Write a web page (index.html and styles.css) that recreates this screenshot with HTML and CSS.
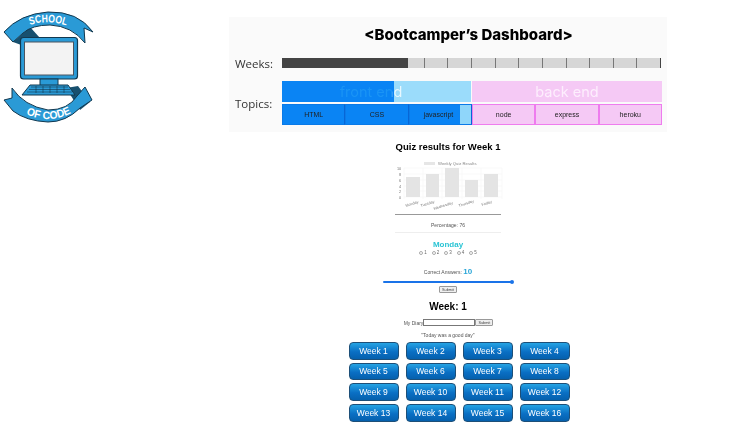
FILE: index.html
```html
<!DOCTYPE html>
<html lang="en">
<head>
    <meta charset="UTF-8">
    <meta name="viewport" content="width=device-width, initial-scale=1.0">
    <title>Bootcamper's Dashboard</title>
    <link rel="stylesheet" href="styles.css">
</head>
<body>

<div class="page">
    <div class="logo-col">
        <svg class="logo" viewBox="0 0 100 130" width="100" height="130">
            <defs>
                <path id="arcTop" d="M30 25 Q48 19 68 26"/>
                <path id="arcBottom" d="M26 114 Q50 125 73 112"/>
            </defs>
            <!-- diagonal bars behind screen -->
            <path d="M13 42 L30 27 L40 38 L24 46 Z" fill="#17506f"/>
            <path d="M66 88 L78 86 L90 102 L80 110 Z" fill="#17506f"/>
            <!-- top ribbon -->
            <path d="M4 32 Q20 14 48 12 Q78 11 93 32 L84 28 L85 43 Q72 26 50 25 Q32 25 23 33 L13 42 Z" fill="#2a9ad6" stroke="#12384f" stroke-width="1"/>
            <!-- monitor -->
            <rect x="20.5" y="37.5" width="57" height="41.5" rx="3" fill="#2a9ad6" stroke="#12384f" stroke-width="1.2"/>
            <rect x="24.5" y="42" width="49" height="33" fill="#f3f3f3" stroke="#4a5560" stroke-width="1"/>
            <rect x="40" y="79" width="18" height="7" fill="#2a9ad6" stroke="#12384f" stroke-width="1"/>
            <path d="M30 85 H68 L75 95 H22 Z" fill="#2a9ad6" stroke="#12384f" stroke-width="1"/>
            <path d="M31 87 H68 M29 89.5 H70 M27 92 H72 M36 86 V93 M43 86 V93 M50 86 V93 M57 86 V93 M64 86 V93" stroke="#12384f" stroke-width=".6" fill="none"/>
            <!-- bottom ribbon -->
            <path d="M4 100 L12 98 L12 88 Q24 106 48 110 Q68 110 77 96 L85 87 L92 100 L80 108 Q66 122 48 122 Q26 121 13 111 Z" fill="#2a9ad6" stroke="#12384f" stroke-width="1"/>
            <text class="logo-text"><textPath href="#arcTop" textLength="37" lengthAdjust="spacingAndGlyphs">SCHOOL</textPath></text>
            <text class="logo-text"><textPath href="#arcBottom" textLength="47" lengthAdjust="spacingAndGlyphs">OF CODE</textPath></text>
        </svg>
    </div>

    <div class="main">
        <div class="dashboard">
            <h1>&lt;Bootcamper’s Dashboard&gt;</h1>

            <div class="row weeks-row">
                <span class="row-label">Weeks:</span>
                <div class="week-track">
                    <div class="week-cell done"></div>
                    <div class="week-cell done"></div>
                    <div class="week-cell done"></div>
                    <div class="week-cell done"></div>
                    <div class="week-cell done"></div>
                    <div class="week-cell part"></div>
                    <div class="week-cell"></div>
                    <div class="week-cell"></div>
                    <div class="week-cell"></div>
                    <div class="week-cell"></div>
                    <div class="week-cell"></div>
                    <div class="week-cell"></div>
                    <div class="week-cell"></div>
                    <div class="week-cell"></div>
                    <div class="week-cell"></div>
                    <div class="week-cell"></div>
                </div>
            </div>

            <div class="row topics-row">
                <span class="row-label">Topics:</span>
                <div class="topics">
                    <div class="topic-heads">
                        <div class="topic-head front">
                            <div class="head-fill"></div>
                            <span>front end</span>
                        </div>
                        <div class="topic-head back"><span>back end</span></div>
                    </div>
                    <div class="subtopics">
                        <div class="sub blue">HTML</div>
                        <div class="sub blue">CSS</div>
                        <div class="sub blue js">javascript<div class="js-rest"></div></div>
                        <div class="sub pink">node</div>
                        <div class="sub pink">express</div>
                        <div class="sub pink">heroku</div>
                    </div>
                </div>
            </div>
        </div>

        <h2 class="quiz-title">Quiz results for Week 1</h2>

        <svg class="chart" viewBox="0 0 110 56" width="110" height="56">
            <rect x="29" y="4" width="11" height="3" fill="#e6e6e6"/>
            <text class="chart-title" x="43" y="7">Weekly Quiz Results</text>
            <g stroke="#f0f0f0" stroke-width=".5">
                <path d="M9 10 H107 M9 16 H107 M9 22 H107 M9 28 H107 M9 33 H107 M9 39 H107"/>
                <path d="M9 10 V41 M28 10 V41 M47 10 V41 M67 10 V41 M86 10 V41 M107 10 V41"/>
            </g>
            <g fill="#e4e4e4">
                <rect x="11" y="19" width="14" height="20"/>
                <rect x="31" y="16" width="13" height="23"/>
                <rect x="50" y="10" width="14" height="29"/>
                <rect x="70" y="22" width="13" height="17"/>
                <rect x="89" y="16" width="14" height="23"/>
            </g>
            <g class="chart-text">
                <text x="2" y="11.5">10</text>
                <text x="4" y="17.5">8</text>
                <text x="4" y="23.5">6</text>
                <text x="4" y="29.5">4</text>
                <text x="4" y="34.5">2</text>
                <text x="4" y="40.5">0</text>
                <text transform="translate(11 49) rotate(-18)">Monday</text>
                <text transform="translate(26 49) rotate(-18)">Tuesday</text>
                <text transform="translate(39 52) rotate(-18)">Wednesday</text>
                <text transform="translate(64 49) rotate(-18)">Thursday</text>
                <text transform="translate(87 48) rotate(-18)">Friday</text>
            </g>
        </svg>

        <hr class="rule dark">
        <p class="tiny percent">Percentage: 76</p>
        <hr class="rule light">

        <div class="day">Monday</div>
        <div class="options">
            <label><span class="radio"></span>1</label>
            <label><span class="radio"></span>2</label>
            <label><span class="radio"></span>3</label>
            <label><span class="radio"></span>4</label>
            <label><span class="radio"></span>5</label>
        </div>

        <p class="tiny answers">Correct Answers: <b>10</b></p>

        <div class="slider"><span class="thumb"></span></div>
        <button class="small-btn submit">Submit</button>

        <h3 class="week-title">Week: 1</h3>

        <div class="diary">
            <span>My Diary</span><input class="diary-input" type="text"><button class="small-btn">Submit</button>
        </div>
        <p class="tiny quote">"Today was a good day"</p>

        <div class="week-grid">
            <button class="week-btn">Week 1</button>
            <button class="week-btn">Week 2</button>
            <button class="week-btn">Week 3</button>
            <button class="week-btn">Week 4</button>
            <button class="week-btn">Week 5</button>
            <button class="week-btn">Week 6</button>
            <button class="week-btn">Week 7</button>
            <button class="week-btn">Week 8</button>
            <button class="week-btn">Week 9</button>
            <button class="week-btn">Week 10</button>
            <button class="week-btn">Week 11</button>
            <button class="week-btn">Week 12</button>
            <button class="week-btn">Week 13</button>
            <button class="week-btn">Week 14</button>
            <button class="week-btn">Week 15</button>
            <button class="week-btn">Week 16</button>
        </div>
    </div>
</div>

</body>
</html>
```

FILE: styles.css
```css
body {
    margin: 0;
    background-color: #fff;
    font-family: "Liberation Sans", Arial, sans-serif;
    color: #222;
}
.page {
    display: flex;
}
.logo-col {
    width: 229px;
    flex: none;
}
.logo {
    display: block;
}
.logo-text {
    font-family: "Liberation Sans", Arial, sans-serif;
    font-size: 11px;
    font-weight: bold;
    fill: #fff;
}
.main {
    width: 438px;
    padding-top: 17px;
    display: flex;
    flex-direction: column;
    align-items: center;
    filter: blur(0.25px);
}

/* dashboard panel */
.dashboard {
    width: 100%;
    height: 115px;
    background-color: #fafafa;
    box-sizing: border-box;
    padding-left: 6px;
}
h1 {
    margin: 0;
    padding: 9px 0 0 35px;
    height: 32px;
    box-sizing: border-box;
    text-align: center;
    font-family: Inter, sans-serif;
    font-size: 15px;
    line-height: 18px;
    font-weight: 800;
    color: #000;
}
.row {
    display: flex;
    align-items: center;
}
.row-label {
    width: 47px;
    font-family: "Open Sans", sans-serif;
    font-size: 11.5px;
    color: #333;
}
.weeks-row {
    margin-top: 9px;
    height: 10px;
}
.week-track {
    width: 378px;
    height: 10px;
    display: flex;
    background-color: #d6d6d6;
    border-right: 1px solid #444;
}
.week-cell {
    flex: 1;
    border-left: 1px solid #777;
}
.week-cell.done {
    background-color: #444;
    border-color: #444;
}
.week-cell.part {
    background: linear-gradient(to right, #444 30%, #d6d6d6 30%);
    border-color: #444;
}
.topics-row {
    margin-top: 13px;
}
.topics {
    width: 380px;
}
.topic-heads {
    display: grid;
    grid-template-columns: 189px 190px;
    gap: 1px;
    height: 21px;
}
.topic-head {
    position: relative;
    text-align: center;
    font-family: Inter, sans-serif;
    font-size: 14.5px;
    line-height: 21px;
}
.topic-head span {
    position: relative;
}
.front {
    background-color: #9bdcfb;
    padding-right: 11px;
}
.front span {
    background: linear-gradient(to right, #1a94f5 84%, #e8f8ff 84%);
    -webkit-background-clip: text;
    background-clip: text;
    color: transparent;
}
.head-fill {
    position: absolute;
    left: 0;
    top: 0;
    bottom: 0;
    width: 112px;
    background-color: #0a84f4;
}
.back {
    background-color: #f5c9f5;
    color: #fdeefd;
}
.subtopics {
    display: grid;
    grid-template-columns: repeat(6, 1fr);
    margin-top: 2px;
    height: 21px;
}
.sub {
    position: relative;
    box-sizing: border-box;
    text-align: center;
    font-size: 7px;
    line-height: 19px;
    color: #222;
}
.sub.blue {
    background-color: #0a84f4;
    border: 1px solid #0a7ae8;
    border-right-color: #0766d6;
}
.sub.pink {
    background-color: #f5c9f5;
    border: 1px solid #ee7cee;
}
.js {
    text-align: left;
    padding-left: 14px;
}
.js-rest {
    position: absolute;
    right: 0;
    top: 0;
    bottom: 0;
    width: 11px;
    background-color: #8fd6fa;
}

/* quiz */
.quiz-title {
    margin: 9px 0 0;
    font-size: 9.5px;
    line-height: 12px;
    color: #000;
}
.chart {
    display: block;
    margin: 5px 0 0 4px;
}
.chart-title {
    font-family: "Liberation Sans", Arial, sans-serif;
    font-size: 4.2px;
    fill: #888;
}
.chart-text {
    font-family: "Liberation Sans", Arial, sans-serif;
    font-size: 3.8px;
    fill: #777;
}
.rule {
    margin: 0;
    width: 106px;
    border: 0;
    height: 1px;
}
.rule.dark {
    background-color: #999;
}
.rule.light {
    background-color: #eee;
}
.tiny {
    margin: 0;
    font-size: 5px;
    line-height: 8px;
    color: #555;
}
.percent {
    padding: 6px 0 3px;
}
.day {
    margin-top: 7px;
    font-size: 8px;
    line-height: 9px;
    font-weight: bold;
    color: #2bc4d4;
}
.options {
    display: flex;
    gap: 5px;
    font-size: 4.5px;
    line-height: 7px;
    color: #666;
}
.radio {
    display: inline-block;
    width: 4px;
    height: 4px;
    margin-right: 1px;
    border: 0.5px solid #aaa;
    border-radius: 50%;
    box-sizing: border-box;
    vertical-align: -0.5px;
}
.answers {
    margin-top: 12px;
}
.answers b {
    font-size: 8px;
    color: #2aa6d8;
}
.slider {
    position: relative;
    margin-top: 5px;
    width: 130px;
    height: 2px;
    border-radius: 1px;
    background-color: #1a73e8;
}
.thumb {
    position: absolute;
    right: -1px;
    top: -1px;
    width: 4px;
    height: 4px;
    border-radius: 50%;
    background-color: #1a73e8;
}
.small-btn {
    padding: 0;
    height: 7px;
    width: 18px;
    border: 0.5px solid #999;
    border-radius: 1px;
    background-color: #efefef;
    font-family: "Liberation Sans", Arial, sans-serif;
    font-size: 3.8px;
    line-height: 6px;
    color: #444;
}
.submit {
    margin-top: 3px;
}
.week-title {
    margin: 8px 0 0;
    font-size: 10px;
    line-height: 12px;
    color: #000;
}
.diary {
    display: flex;
    align-items: center;
    margin-top: 6px;
    font-size: 5px;
    color: #555;
    margin-left: 1px;
}
.diary-input {
    width: 52px;
    height: 7px;
    padding: 0;
    box-sizing: border-box;
    border: 0.5px solid #777;
    background-color: #fff;
}
.quote {
    margin-top: 5px;
}

/* week picker */
.week-grid {
    display: grid;
    grid-template-columns: repeat(4, 50px);
    grid-auto-rows: 17.5px;
    gap: 3.2px 7px;
    margin: 3px 0 0 22px;
}
.week-btn {
    padding: 0;
    border: 1px solid #1d4f78;
    border-radius: 4px;
    background: linear-gradient(to bottom, #25a4e4, #0a6fc4 55%, #0560ad);
    font-family: "Liberation Sans", Arial, sans-serif;
    font-size: 8.5px;
    color: #fff;
}
```
